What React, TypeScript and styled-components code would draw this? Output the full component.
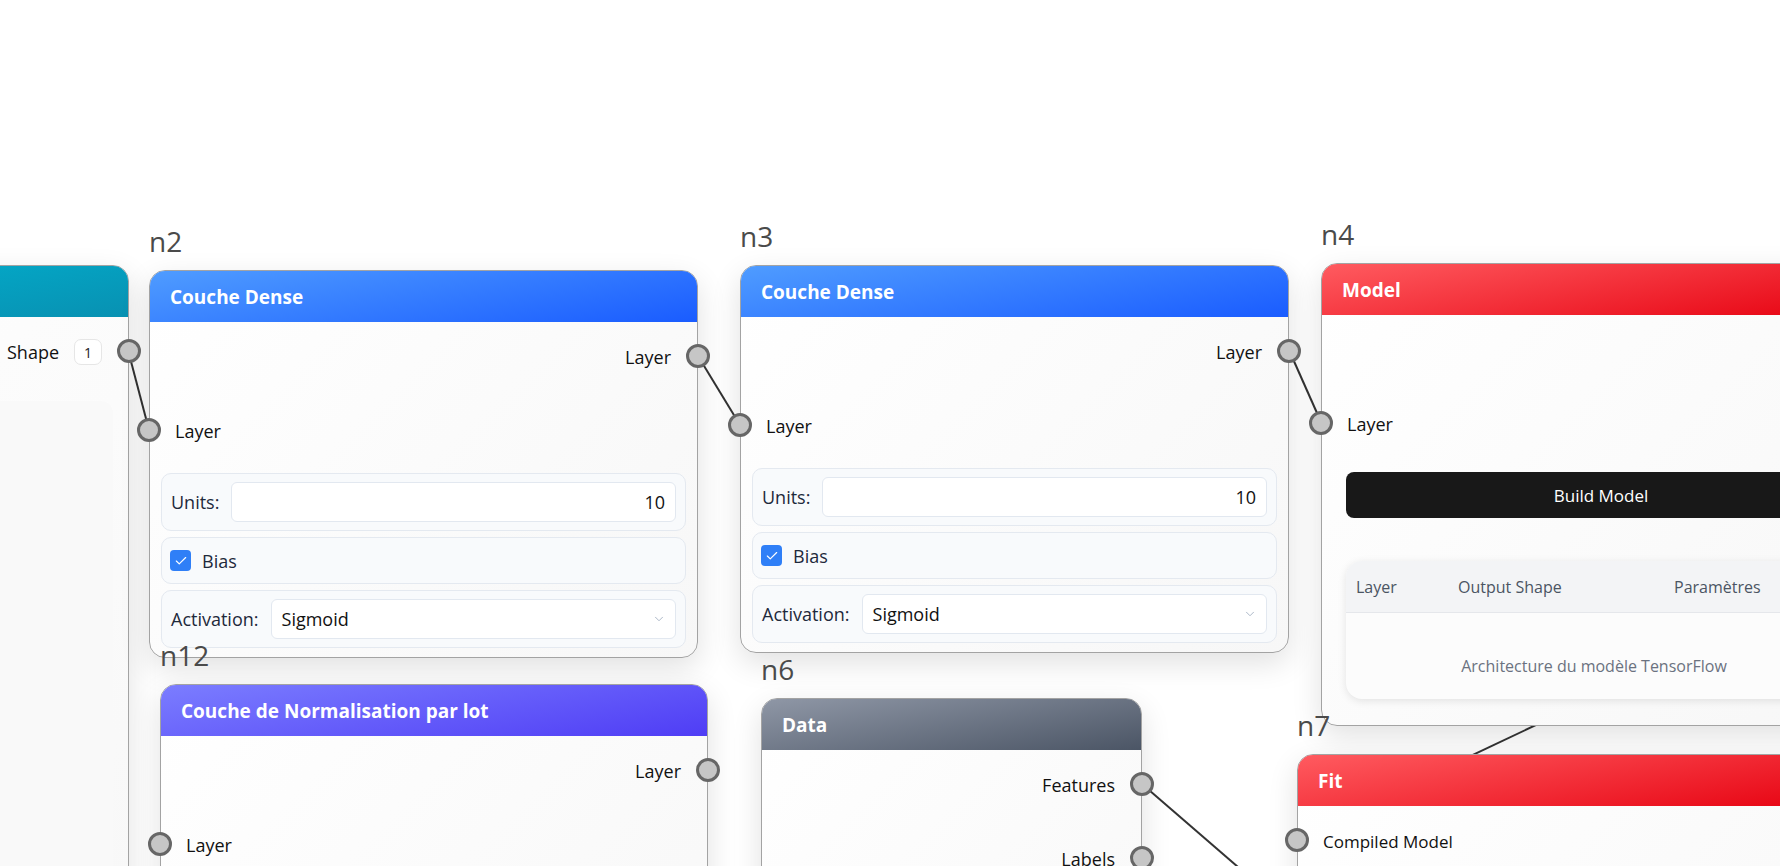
import React from "react";
import styled, { createGlobalStyle } from "styled-components";
import { ChevronDown, Check } from "lucide-react";

const Global = createGlobalStyle`
  html, body { margin: 0; padding: 0; background: #ffffff; overflow: hidden; }
  * { box-sizing: border-box; }
`;

const FONT = `"Open Sans", "Noto Sans", "Liberation Sans", sans-serif`;

const Canvas = styled.div`
  position: relative;
  width: 1780px;
  height: 866px;
  overflow: hidden;
  background: #ffffff;
  font-family: ${FONT};
`;

const EdgeLayer = styled.svg`
  position: absolute;
  left: 0;
  top: 0;
  width: 1780px;
  height: 866px;
  pointer-events: none;
`;

const NodeWrap = styled.div<{ $x: number; $y: number; $w: number }>`
  position: absolute;
  left: ${(p) => p.$x}px;
  top: ${(p) => p.$y - 46}px;
  width: ${(p) => p.$w}px;
  display: flex;
  flex-direction: column;
`;

const NodeId = styled.div`
  font-size: 28px;
  line-height: 34px;
  height: 34px;
  margin-bottom: 12px;
  color: #4a4a4a;
  font-weight: 400;
  position: relative;
  z-index: 2;
`;

const Card = styled.div<{ $h?: number }>`
  position: relative;
  border: 1px solid #a3a3a3;
  border-radius: 16px;
  background: linear-gradient(135deg, #ffffff 0%, #f7f7f7 100%);
  box-shadow: 0 10px 30px rgba(0, 0, 0, 0.12);
  ${(p) => (p.$h ? `height: ${p.$h}px;` : "")}
`;

const Header = styled.div<{ $from: string; $to: string }>`
  height: 51px;
  border-radius: 15px 15px 0 0;
  background: linear-gradient(170deg, ${(p) => p.$from} 0%, ${(p) => p.$to} 100%);
  display: flex;
  align-items: center;
  padding: 0 20px;
  color: #ffffff;
  font-weight: 700;
  font-size: 19px;
  white-space: nowrap;
  overflow: hidden;
`;

const Body = styled.div<{ $pb?: number }>`
  padding: 0 11px ${(p) => (p.$pb ?? 9)}px;
  display: flex;
  flex-direction: column;
`;

const Ports = styled.div`
  display: flex;
  flex-direction: column;
  gap: 34px;
  padding: 14px 0 23px;
`;

const PortRow = styled.div<{ $side: "in" | "out" }>`
  position: relative;
  height: 40px;
  display: flex;
  align-items: center;
  justify-content: ${(p) => (p.$side === "in" ? "flex-start" : "flex-end")};
  padding: ${(p) => (p.$side === "in" ? "2px 0 0 14px" : "2px 15px 0 0")};
`;

const PortLabel = styled.span<{ $small?: boolean }>`
  font-size: ${(p) => (p.$small ? "17px" : "18px")};
  color: #111111;
  white-space: nowrap;
`;

const Handle = styled.div<{ $side: "in" | "out" }>`
  position: absolute;
  top: 50%;
  ${(p) => (p.$side === "in" ? "left: -24px;" : "right: -24px;")}
  width: 24px;
  height: 24px;
  margin-top: -12px;
  border-radius: 50%;
  background: #c6c6c6;
  border: 3px solid #666666;
  z-index: 3;
`;

const Badge = styled.span`
  display: inline-flex;
  align-items: center;
  justify-content: center;
  width: 28px;
  height: 26px;
  margin-left: 15px;
  border: 1px solid #e6e6e6;
  border-radius: 7px;
  background: #ffffff;
  font-size: 14px;
  color: #222;
`;

const Fields = styled.div`
  display: flex;
  flex-direction: column;
  gap: 6px;
`;

const FieldRow = styled.div<{ $tight?: boolean }>`
  display: flex;
  align-items: center;
  gap: ${(p) => (p.$tight ? "11px" : "12px")};
  background: #f8fafc;
  border: 1px solid #e4e9f0;
  border-radius: 10px;
  padding: ${(p) => (p.$tight ? "12px 9px 12px 8px" : "8px 9px")};
`;

const FieldLabel = styled.span`
  font-size: 18px;
  line-height: 20px;
  color: #1e293b;
  white-space: nowrap;
`;

const NumberBox = styled.div`
  flex: 1;
  height: 40px;
  background: #ffffff;
  border: 1px solid #e2e8f0;
  border-radius: 6px;
  display: flex;
  align-items: center;
  justify-content: flex-end;
  padding: 0 10px;
  font-size: 18px;
  color: #111;
`;

const SelectBox = styled.div`
  flex: 1;
  height: 40px;
  background: #ffffff;
  border: 1px solid #e2e8f0;
  border-radius: 6px;
  display: flex;
  align-items: center;
  justify-content: space-between;
  padding: 0 9px 0 10px;
  font-size: 18px;
  color: #111;
`;

const CheckBox = styled.span`
  width: 21px;
  height: 21px;
  border-radius: 4px;
  background: #2f7ff7;
  display: inline-flex;
  align-items: center;
  justify-content: center;
`;

const FadedPanel = styled.div`
  margin: 7px 4px 0 0;
  height: 500px;
  border-radius: 12px;
  background: #f9f9f9;
`;

const ModelArea = styled.div`
  padding: 6px 13px 26px;
  display: flex;
  flex-direction: column;
  gap: 43px;
`;

const BuildButton = styled.div`
  height: 46px;
  border-radius: 8px;
  background: #181818;
  color: #ffffff;
  display: flex;
  align-items: center;
  justify-content: center;
  font-size: 17px;
`;

const SummaryTable = styled.div`
  border-radius: 16px;
  background: #fcfcfc;
  box-shadow: 0 2px 8px rgba(0, 0, 0, 0.1);
  overflow: hidden;
`;

const TableHead = styled.div`
  display: grid;
  grid-template-columns: 102px 216px 1fr;
  height: 52px;
  align-items: center;
  background: #f3f4f6;
  border-bottom: 1px solid #e5e7eb;
  font-size: 16px;
  color: #4b5563;
`;

const HeadCell = styled.span`
  padding-left: 10px;
  white-space: nowrap;
`;

const TableEmpty = styled.div`
  height: 86px;
  padding: 41px 14px 0 0;
  text-align: center;
  font-size: 16px;
  line-height: 24px;
  color: #6b7280;
`;

type Port = { label?: string; side: "in" | "out"; badge?: string; small?: boolean };

const PortList: React.FC<{ ports: Port[] }> = ({ ports }) => (
  <Ports>
    {ports.map((p, i) => (
      <PortRow key={i} $side={p.side}>
        {p.side === "in" && <Handle $side="in" />}
        {p.label && <PortLabel $small={p.small}>{p.label}</PortLabel>}
        {p.badge && <Badge>{p.badge}</Badge>}
        {p.side === "out" && <Handle $side="out" />}
      </PortRow>
    ))}
  </Ports>
);

const DenseFields: React.FC = () => (
  <Fields>
    <FieldRow>
      <FieldLabel>Units:</FieldLabel>
      <NumberBox>10</NumberBox>
    </FieldRow>
    <FieldRow $tight>
      <CheckBox>
        <Check size={14} color="#ffffff" strokeWidth={2} />
      </CheckBox>
      <FieldLabel>Bias</FieldLabel>
    </FieldRow>
    <FieldRow>
      <FieldLabel>Activation:</FieldLabel>
      <SelectBox>
        <span>Sigmoid</span>
        <ChevronDown size={14} color="#a0aec0" strokeWidth={1.5} />
      </SelectBox>
    </FieldRow>
  </Fields>
);

const Node: React.FC<{
  id?: string;
  x: number;
  y: number;
  w: number;
  title?: string;
  from: string;
  to: string;
  h?: number;
  children?: React.ReactNode;
}> = ({ id, x, y, w, title, from, to, h, children }) => (
  <NodeWrap $x={x} $y={y} $w={w}>
    <NodeId>{id}</NodeId>
    <Card $h={h}>
      <Header $from={from} $to={to}>{title}</Header>
      {children}
    </Card>
  </NodeWrap>
);

const BLUE = ["#4f9cff", "#1a5cff"];
const RED = ["#ff5b60", "#e6000f"];

const edges: [number, number, number, number][] = [
  [128, 350, 149, 430],
  [698, 356, 740, 425],
  [1289, 350, 1321, 422],
  [1142, 784, 1297, 918],
  [1297, 838, 1900, 553],
];

export default function App() {
  return (
    <Canvas>
      <Global />
      <EdgeLayer viewBox="0 0 1780 866">
        {edges.map(([x1, y1, x2, y2], i) => (
          <line key={i} x1={x1} y1={y1} x2={x2} y2={y2} stroke="#333333" strokeWidth={2} />
        ))}
      </EdgeLayer>

      <Node x={-420} y={265} w={549} from="#00b8d6" to="#0891b2" h={800}>
        <Body>
          <Ports>
            <PortRow $side="out">
              <PortLabel>Shape</PortLabel>
              <Badge>1</Badge>
              <Handle $side="out" />
            </PortRow>
          </Ports>
          <FadedPanel />
        </Body>
      </Node>

      <Node id="n2" x={149} y={270} w={549} title="Couche Dense" from={BLUE[0]} to={BLUE[1]}>
        <Body>
          <PortList ports={[{ label: "Layer", side: "out" }, { label: "Layer", side: "in" }]} />
          <DenseFields />
        </Body>
      </Node>

      <Node id="n3" x={740} y={265} w={549} title="Couche Dense" from={BLUE[0]} to={BLUE[1]}>
        <Body>
          <PortList ports={[{ label: "Layer", side: "out" }, { label: "Layer", side: "in" }]} />
          <DenseFields />
        </Body>
      </Node>

      <Node id="n4" x={1321} y={263} w={560} title="Model" from={RED[0]} to={RED[1]}>
        <Body $pb={0}>
          <PortList ports={[{ side: "out" }, { label: "Layer", side: "in" }]} />
          <ModelArea>
            <BuildButton>Build Model</BuildButton>
            <SummaryTable>
              <TableHead>
                <HeadCell>Layer</HeadCell>
                <HeadCell>Output Shape</HeadCell>
                <HeadCell>Paramètres</HeadCell>
              </TableHead>
              <TableEmpty>Architecture du modèle TensorFlow</TableEmpty>
            </SummaryTable>
          </ModelArea>
        </Body>
      </Node>

      <Node id="n12" x={160} y={684} w={548} title="Couche de Normalisation par lot" from="#7b7dff" to="#4f3df5" h={400}>
        <Body>
          <PortList ports={[{ label: "Layer", side: "out" }, { label: "Layer", side: "in" }]} />
        </Body>
      </Node>

      <Node id="n6" x={761} y={698} w={381} title="Data" from="#8f97a6" to="#4b5565" h={400}>
        <Body>
          <PortList ports={[{ label: "Features", side: "out" }, { label: "Labels", side: "out" }]} />
        </Body>
      </Node>

      <Node id="n7" x={1297} y={754} w={560} title="Fit" from={RED[0]} to={RED[1]} h={400}>
        <Body>
          <PortList
            ports={[
              { label: "Compiled Model", side: "in", small: true },
              { label: "Features", side: "in", small: true },
            ]}
          />
        </Body>
      </Node>
    </Canvas>
  );
}
